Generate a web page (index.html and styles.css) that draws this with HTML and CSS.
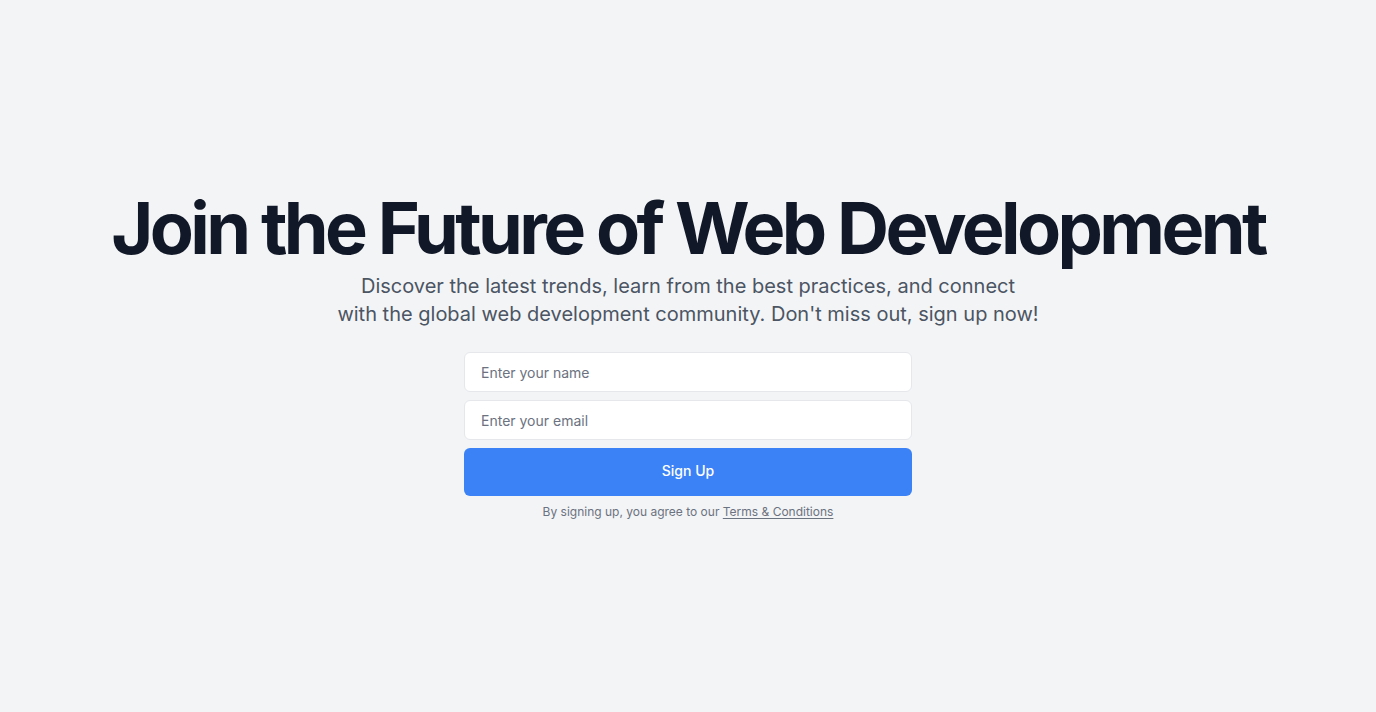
FILE: index.html
```html
<!DOCTYPE html>
<html lang="en">
<head>
<meta charset="utf-8">
<title>Join the Future of Web Development</title>
<link rel="stylesheet" href="styles.css">
</head>
<body>
<main class="hero">
  <h1 class="title">Join the Future of Web Development</h1>
  <p class="lead">Discover the latest trends, learn from the best practices, and connect<br>with the global web development community. Don't miss out, sign up now!</p>
  <form class="form">
    <input class="field" type="text" placeholder="Enter your name">
    <input class="field" type="email" placeholder="Enter your email">
    <button class="btn" type="button">Sign Up</button>
  </form>
  <p class="note">By signing up, you agree to our <a class="link" href="#">Terms &amp; Conditions</a></p>
</main>
</body>
</html>
```
FILE: styles.css
```css
* { box-sizing: border-box; }
html, body { margin: 0; padding: 0; }
body {
  background: #f3f4f6;
  font-family: Inter, "Noto Sans", sans-serif;
  color: #111827;
}
.hero {
  min-height: 100vh;
  display: flex;
  flex-direction: column;
  align-items: center;
  justify-content: center;
  text-align: center;
  padding: 0 16px;
}
.title {
  margin: 0 0 8px;
  font-size: 72px;
  line-height: 1;
  font-weight: 700;
  letter-spacing: -0.05em;
  color: #111827;
}
.lead {
  margin: 0 0 24px;
  max-width: 720px;
  font-size: 20px;
  line-height: 28px;
  color: #4b5563;
}
.form {
  width: 448px;
  display: flex;
  flex-direction: column;
  gap: 8px;
}
.field {
  height: 40px;
  width: 100%;
  padding: 0 16px;
  border: 1px solid #e5e7eb;
  border-radius: 6px;
  background: #fff;
  font-family: Inter, sans-serif;
  font-size: 14px;
  color: #111827;
  outline: none;
}
.field::placeholder { color: #6b7280; }
.btn {
  height: 48px;
  width: 100%;
  border: 0;
  border-radius: 6px;
  background: #3b82f6;
  color: #fff;
  font-family: Inter, sans-serif;
  font-size: 14px;
  font-weight: 500;
  line-height: 20px;
  padding: 0 0 2px;
  cursor: pointer;
}
.note {
  margin: 8px 0 0;
  font-size: 12px;
  line-height: 16px;
  color: #6b7280;
}
.link {
  color: #6b7280;
  text-decoration: underline;
  text-underline-offset: 2px;
}
```
